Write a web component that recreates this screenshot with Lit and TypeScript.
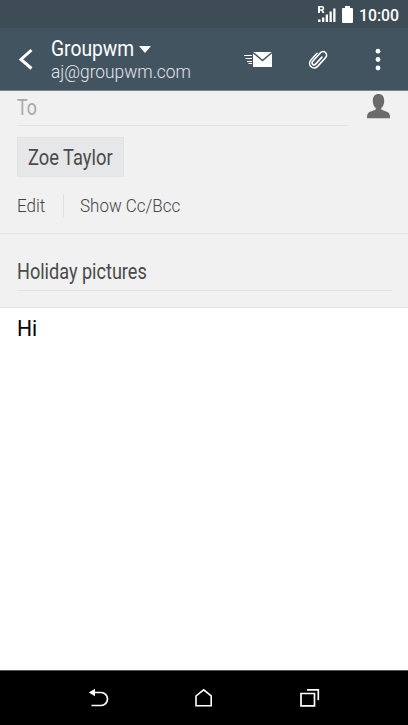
import { LitElement, html, css } from "lit";
import { customElement } from "lit/decorators.js";

@customElement("app-root")
export class AppRoot extends LitElement {
  static styles = css`
    :host { display: flex; flex-direction: column; width: 408px; height: 725px; background: #fff; font-family: Roboto, "Noto Sans", sans-serif; overflow: hidden; }
    * { box-sizing: border-box; }
    svg { display: block; flex: none; }
    .t { display: block; width: max-content; white-space: nowrap; transform-origin: 0 50%; }
    .status { height: 28px; flex: none; background: #3d4c55; display: flex; align-items: center; padding: 2px 9px 0 0; justify-content: flex-end; color: #fff; }
    .sig { margin: -2px 6px 0 0; }
    .clock { width: 40px; font-size: 16px; line-height: 27px; font-weight: 500; }
    .clock .t { transform: scaleX(.985); }
    .bar { height: 63px; flex: none; background: #435461; border-bottom: 1px solid #75838c; display: flex; color: #fff; padding: 0 19px 0 17px; }
    .back { margin-top: 20px; }
    .acct { margin-left: 18px; padding-top: 8px; width: 193px; }
    .name { display: flex; height: 25px; align-items: center; }
    .nbox { width: 88px; }
    .name .t { font-size: 22px; line-height: 25px; transform: scaleX(.875); }
    .mail { font-size: 17.5px; line-height: 23px; font-weight: 300; color: #e3e7e9; transform: scaleX(.99); }
    .send { margin-top: 23px; }
    .clip { margin: 20px 0 0 34px; }
    .more { margin: 20px 0 0 auto; }
    .head { background: #f1f1f1; height: 143px; flex: none; border-bottom: 1px solid #e2e4e4; padding: 0 17px; }
    .to { display: flex; justify-content: space-between; height: 35px; }
    .field { width: 331px; border-bottom: 1px solid #e2e4e4; color: #a9a9a9; }
    .field .t { font-size: 22px; line-height: 33px; transform: scaleX(.81); }
    .chip { margin-top: 11px; width: 107px; height: 40px; padding-left: 10px; background: #e5e7e8; border: 1px solid #e1e4e5; color: #4a4a4a; }
    .chip .t { font-size: 22px; line-height: 40px; transform: scaleX(.832); }
    .links { display: flex; margin-top: 17px; height: 23px; font-size: 17.5px; font-weight: 300; line-height: 25px; color: #444; }
    .links .t { transform: scaleX(.97); }
    .edit { width: 47px; border-right: 1px solid #e0e2e2; margin-right: 16px; }
    .subj { height: 74px; flex: none; background: #f1f1f1; border-bottom: 1px solid #e2e4e4; padding: 22px 16px 0 17px; color: #4a4a4a; }
    .line { height: 35px; border-bottom: 1px solid #e2e4e4; }
    .line .t { font-size: 22px; line-height: 32px; transform: scaleX(.822); }
    .body { flex: 1; padding: 7px 17px; font-size: 22px; line-height: 27px; color: #000; }
    .body .t { transform: scaleX(.96); }
    .nav { height: 55px; flex: none; background: #000; border-top: 1px solid #555; display: flex; padding: 17px 88px 0; }
    .home { margin-left: 84px; }
    .recent { margin-left: auto; }
  `;

  render() {
    return html`
      <div class="status">
        <svg class="sig" width="18" height="17" viewBox="0 0 18 17" fill="#fff">
          <path fill-rule="evenodd" d="M0 0h4.300q2 0 2 2.200 0 1.500-1.200 2L6.500 7H4.500L3.400 4.700H2V7H0zM2 1.500v1.700h2q.6 0 .6-.85T4 1.500z"/>
          <path d="M0 13.500h2.500V16H0zM4 11.500h2.300V16H4zM7.700 8.500H10V16H7.700zM11.500 5.500h2.300V16h-2.300zM15.200 2.500h2.300V16h-2.300z"/>
        </svg>
        <svg class="sig" width="11" height="17" viewBox="0 0 11 17"><path fill="#fff" d="M3 0h5v2h2q1 0 1 1v13q0 1-1 1H1q-1 0-1-1V3q0-1 1-1h2z"/></svg>
        <div class="clock"><span class="t">10:00</span></div>
      </div>
      <div class="bar">
        <svg class="back" width="16" height="22" viewBox="0 0 16 22"><path d="M14.500 2 4 11.500l10.500 9" fill="none" stroke="#fff" stroke-width="3"/></svg>
        <div class="acct">
          <div class="name">
            <div class="nbox"><span class="t">Groupwm</span></div>
            <svg width="12" height="8" viewBox="0 0 12 8"><path d="M0 1h12L6 8z" fill="#fff"/></svg>
          </div>
          <span class="t mail">aj@groupwm.com</span>
        </div>
        <svg class="send" width="29" height="17" viewBox="0 0 29 17">
          <path fill="#fff" d="M9 1h19v15H9z"/>
          <path d="m9 1.500 9.500 8 9.500-8" fill="none" stroke="#435461" stroke-width="1.500"/>
          <path d="M0 4.500h8M1.500 7.500H8M3 10.500h5M4.500 12.500H8" stroke="#fff" stroke-width="1.100"/>
        </svg>
        <svg class="clip" width="21" height="23" viewBox="0 0 21 23">
          <path transform="translate(10.900 11.500) rotate(42)" fill="none" stroke="#fff" stroke-width="1.600" stroke-linecap="round" d="M-4.800-4V5.300a4.600 4.600 0 0 0 9.200 0V-6.700a3.500 3.500 0 0 0-7 0V5a2 2 0 0 0 4 0V-4.500"/>
        </svg>
        <svg class="more" width="21" height="24" viewBox="0 0 21 24" fill="#fff"><circle cx="10" cy="3.200" r="2.400"/><circle cx="10" cy="11.500" r="2.400"/><circle cx="10" cy="20" r="2.400"/></svg>
      </div>
      <div class="head">
        <div class="to">
          <div class="field"><span class="t">To</span></div>
          <svg width="25" height="29" viewBox="0 0 25 29"><path fill="#6b6b6b" d="M12.500 3c3.700 0 5.700 2.600 5.700 6.700 0 3.500-1.300 6.200-3 7.400v1.100c1.300 1.400 5.800 2 7.500 3.700 1.100 1.100 1.300 2.700 1.300 5.300H1c0-2.600.2-4.200 1.300-5.300 1.700-1.700 6.200-2.300 7.500-3.700v-1.100c-1.700-1.200-3-3.900-3-7.400C6.800 5.600 8.800 3 12.500 3z"/></svg>
        </div>
        <div class="chip"><span class="t">Zoe Taylor</span></div>
        <div class="links"><div class="edit"><span class="t">Edit</span></div><span class="t">Show Cc/Bcc</span></div>
      </div>
      <div class="subj"><div class="line"><span class="t">Holiday pictures</span></div></div>
      <div class="body"><span class="t">Hi</span></div>
      <div class="nav">
        <svg width="22" height="20" viewBox="0 0 22 20"><path d="M5 4.500h8a6.500 6.500 0 0 1 0 13H3.500" fill="none" stroke="#fff" stroke-width="1.700"/><path fill="#fff" d="M.8 4.500 7 .8v7.400z"/></svg>
        <svg class="home" width="18" height="20" viewBox="0 0 18 20"><path d="M2 8 9.700 1.800 17.200 8v9.800H2z" fill="none" stroke="#fff" stroke-width="1.600"/></svg>
        <svg class="recent" width="20" height="20" viewBox="0 0 20 20" fill="none" stroke="#fff" stroke-width="1.700"><path d="M1 5.500h13.500v12.300H1zM7 1.800h11.300v10.500"/></svg>
      </div>
    `;
  }
}
